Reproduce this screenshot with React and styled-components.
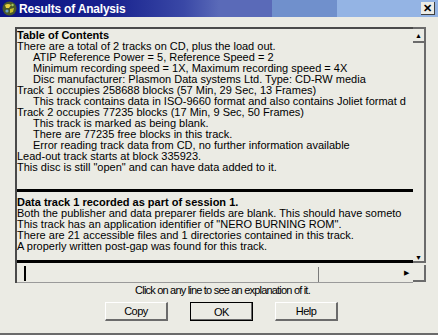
import styled, { createGlobalStyle } from "styled-components";

const GlobalStyle = createGlobalStyle`
  body {
    margin: 0;
    background: #ebebe4;
    font-family: "Liberation Sans", Arial, sans-serif;
  }
`;

const Window = styled.div`
  width: 438px;
  height: 335px;
  box-sizing: border-box;
  border-bottom: 2px solid #6b6b6b;
  background: #ebebe4;
  display: flex;
  flex-direction: column;
`;

const TitleBar = styled.div`
  height: 17px;
  display: flex;
  align-items: center;
  padding: 0 2px;
  background: linear-gradient(
    90deg,
    #0c1486 0%,
    #18228e 25%,
    #3a48a6 42%,
    #5a6ab8 50%,
    #5a6ab8 62%,
    #7090cc 62%,
    #7090cc 77%,
    #94b4e4 77%,
    #94b4e4 100%
  );
`;

const Title = styled.div`
  flex: 1;
  margin-left: 2px;
  color: #fff;
  font-weight: bold;
  font-size: 12px;
  letter-spacing: -0.2px;
`;

const CloseBtn = styled.div`
  width: 13px;
  height: 12px;
  margin-right: 1px;
  background: #ecece6;
  border-right: 1px solid #404040;
  border-bottom: 1px solid #404040;
  display: flex;
  align-items: center;
  justify-content: center;
  font-size: 11px;
  font-weight: bold;
  line-height: 1;
  color: #000;
`;

const Body = styled.div`
  flex: 1;
  padding: 10px 12px 0 15px;
  display: flex;
  flex-direction: column;
`;

const Panel = styled.div`
  height: 256px;
  box-sizing: border-box;
  border-top: 2px solid #4a4a4a;
  border-left: 2px solid #4a4a4a;
  display: grid;
  grid-template-columns: 1fr 13px;
  grid-template-rows: 1fr 20px;
`;

const ListArea = styled.div`
  display: flex;
  flex-direction: column;
  overflow: hidden;
`;

const Pane = styled.div`
  height: ${(p) => p.$h}px;
  flex-shrink: 0;
  padding-top: ${(p) => p.$top}px;
  box-sizing: border-box;
  overflow: hidden;
  white-space: nowrap;
`;

const Line = styled.div`
  font-size: 11px;
  line-height: 11px;
  height: 11px;
  color: #000;
  padding-left: ${(p) => (p.$indent ? 16 : 0)}px;
  font-weight: ${(p) => (p.$bold ? "bold" : "normal")};
`;

const Rule = styled.div`
  height: 3px;
  flex-shrink: 0;
  background: #000;
`;

const VScroll = styled.div`
  display: flex;
  flex-direction: column;
  margin-top: -2px;
`;

const ArrowBtn = styled.div`
  height: ${(p) => p.$h}px;
  box-sizing: border-box;
  border-right: 2px solid #6b6b6b;
  border-bottom: 2px solid #6b6b6b;
  border-top: ${(p) => (p.$top ? "2px solid #6b6b6b" : "none")};
  display: flex;
  align-items: ${(p) => p.$align || "center"};
  justify-content: center;
  font-size: 7px;
  line-height: 1;
  color: #000;
`;

const Track = styled.div`
  flex: 1;
  border-right: 2px solid #6b6b6b;
`;

const HScroll = styled.div`
  display: flex;
  align-items: stretch;
  border-bottom: 1px solid #9a9a9a;
`;

const Thumb = styled.div`
  width: 7px;
  margin: 3px 0 1px 2px;
  border-right: 2px solid #000;
  box-sizing: border-box;
`;

const HTrack = styled.div`
  width: 292px;
  border-right: 1px solid #7a7a7a;
  margin-top: 4px;
`;

const HArrow = styled.div`
  flex: 1;
  display: flex;
  align-items: center;
  justify-content: flex-end;
  padding-right: 4px;
  font-size: 7px;
  color: #000;
`;

const Corner = styled.div`
  margin: 2px 0 1px 0;
  border-right: 2px solid #6b6b6b;
  border-bottom: 2px solid #6b6b6b;
`;

const Hint = styled.div`
  margin-top: 2px;
  text-align: center;
  font-size: 11px;
  line-height: 11px;
  letter-spacing: -0.8px;
  color: #000;
  padding-left: 4px;
`;

const Buttons = styled.div`
  display: flex;
  justify-content: center;
  gap: 22px;
  margin-top: 6px;
  padding-left: 2px;
`;

const Button = styled.div`
  width: 63px;
  height: 19px;
  box-sizing: border-box;
  display: flex;
  align-items: center;
  justify-content: center;
  font-size: 11px;
  letter-spacing: -0.5px;
  color: #000;
  background: #ebebe4;
  border-top: 1px solid #fff;
  border-left: 1px solid #fff;
  border-right: 2px solid #6b6b6b;
  border-bottom: 2px solid #6b6b6b;
  ${(p) =>
    p.$default &&
    `
    border: 1px solid #000;
    box-shadow: inset -1px -1px 0 #6b6b6b;
  `}
`;

function AppIcon() {
  return (
    <svg width="15" height="15" viewBox="0 0 15 15">
      <circle cx="7.5" cy="7.5" r="7" fill="#4a5a2a" />
      <path d="M3 4 Q6 2 9 4 L7 7 L4 7 Z" fill="#e8d040" />
      <path d="M8 8 L12 7 L11 11 L8 12 Z" fill="#c8c030" />
      <circle cx="5" cy="10" r="1.6" fill="#6aa0c8" />
      <circle cx="10.5" cy="4" r="1.2" fill="#a0c860" />
    </svg>
  );
}

const toc = [
  { t: "There are a total of 2 tracks on CD, plus the load out." },
  { t: "ATIP Reference Power = 5, Reference Speed = 2", i: true },
  { t: "Minimum recording speed = 1X, Maximum recording speed = 4X", i: true },
  { t: "Disc manufacturer: Plasmon Data systems Ltd.  Type: CD-RW media", i: true },
  { t: "Track 1 occupies 258688 blocks (57 Min, 29 Sec, 13 Frames)" },
  { t: "This track contains data in ISO-9660 format and also contains Joliet format d", i: true },
  { t: "Track 2 occupies 77235 blocks (17 Min, 9 Sec, 50 Frames)" },
  { t: "This track is marked as being blank.", i: true },
  { t: "There are 77235 free blocks in this track.", i: true },
  { t: "Error reading track data from CD, no further information available", i: true },
  { t: "Lead-out track starts at block 335923." },
  { t: "This disc is still \"open\" and can have data added to it." },
];

const details = [
  "Both the publisher and data preparer fields are blank.  This should have someto",
  "This track has an application identifier of \"NERO BURNING ROM\".",
  "There are 21 accessible files and 1 directories contained in this track.",
  "A properly written post-gap was found for this track.",
];

export default function App() {
  return (
    <>
      <GlobalStyle />
      <Window>
        <TitleBar>
          <AppIcon />
          <Title>Results of Analysis</Title>
          <CloseBtn>✕</CloseBtn>
        </TitleBar>
        <Body>
          <Panel>
            <ListArea>
              <Pane $h={160} $top={1}>
                <Line $bold>Table of Contents</Line>
                {toc.map((l, n) => (
                  <Line key={n} $indent={l.i}>
                    {l.t}
                  </Line>
                ))}
              </Pane>
              <Rule />
              <Pane $h={68} $top={5}>
                <Line $bold>Data track 1 recorded as part of session 1.</Line>
                {details.map((l, n) => (
                  <Line key={n}>{l}</Line>
                ))}
              </Pane>
              <Rule />
            </ListArea>
            <VScroll>
              <ArrowBtn $h={16} $top>▲</ArrowBtn>
              <Track />
              <ArrowBtn $h={18} $align="flex-end">▼</ArrowBtn>
            </VScroll>
            <HScroll>
              <Thumb />
              <HTrack />
              <HArrow>▶</HArrow>
            </HScroll>
            <Corner />
          </Panel>
          <Hint>Click on any line to see an explanation of it.</Hint>
          <Buttons>
            <Button>Copy</Button>
            <Button $default>OK</Button>
            <Button>Help</Button>
          </Buttons>
        </Body>
      </Window>
    </>
  );
}
